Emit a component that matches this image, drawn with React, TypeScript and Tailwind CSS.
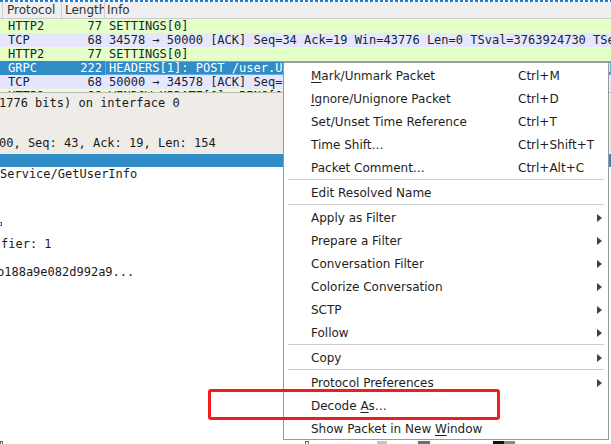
import type { ReactNode } from "react";

type Packet = { proto: string; len: string; info: string; row: string; selected?: boolean };

const packets: Packet[] = [
  { proto: "HTTP2", len: "77", info: "SETTINGS[0]", row: "bg-[#e4ffc7]" },
  {
    proto: "TCP",
    len: "68",
    info: "34578 → 50000 [ACK] Seq=34 Ack=19 Win=43776 Len=0 TSval=3763924730 TSecr=3763924730",
    row: "bg-[#e7e6ff]",
  },
  { proto: "HTTP2", len: "77", info: "SETTINGS[0]", row: "bg-[#e4ffc7]" },
  {
    proto: "GRPC",
    len: "222",
    info: "HEADERS[1]: POST /user.UserService/GetUserInfo, DATA[1] (GRPC) (PROTOBUF)",
    row: "bg-[#308cc6]",
    selected: true,
  },
  {
    proto: "TCP",
    len: "68",
    info: "50000 → 34578 [ACK] Seq=19 Ack=197 Win=43648 Len=0 TSval=3763924731",
    row: "bg-[#e7e6ff]",
  },
  { proto: "HTTP2", len: "98", info: "WINDOW_UPDATE[0], PING[0]", row: "bg-[#e4ffc7]" },
];

type MenuEntry = { label: ReactNode; shortcut?: string; sub?: boolean } | "sep";

const u = (c: string) => <span className="underline underline-offset-[2px]">{c}</span>;

const menu: MenuEntry[] = [
  { label: <>{u("M")}ark/Unmark Packet</>, shortcut: "Ctrl+M" },
  { label: <>{u("I")}gnore/Unignore Packet</>, shortcut: "Ctrl+D" },
  { label: "Set/Unset Time Reference", shortcut: "Ctrl+T" },
  { label: "Time Shift…", shortcut: "Ctrl+Shift+T" },
  { label: "Packet Comment…", shortcut: "Ctrl+Alt+C" },
  "sep",
  { label: "Edit Resolved Name" },
  "sep",
  { label: "Apply as Filter", sub: true },
  { label: "Prepare a Filter", sub: true },
  { label: "Conversation Filter", sub: true },
  { label: "Colorize Conversation", sub: true },
  { label: "SCTP", sub: true },
  { label: "Follow", sub: true },
  "sep",
  { label: "Copy", sub: true },
  "sep",
  { label: "Protocol Preferences", sub: true },
  { label: <>Decode {u("A")}s…</> },
  { label: <>Show Packet in New {u("W")}indow</> },
];

const mono = "font-['DejaVu_Sans_Mono','Liberation_Mono',monospace] text-[12px]";
const sans = "font-['DejaVu_Sans','Liberation_Sans',sans-serif] text-[12px]";

function ContextMenu() {
  return (
    <div className={`absolute left-[283px] top-[62px] w-[326px] bg-white border border-[#9a9a9a] ${sans} text-[#1e1e1e]`}>
      {menu.map((m, i) =>
        m === "sep" ? (
          <div key={i} className="h-[2px] mx-1 flex flex-col justify-end">
            <div className="h-px bg-[#cdcdcd]" />
          </div>
        ) : (
          <div key={i} className="h-[23px] flex items-center pt-[2px] pl-[27px] pr-[5px] leading-none">
            <span className="w-[207px] whitespace-nowrap">{m.label}</span>
            <span className="flex-1 whitespace-nowrap">{m.shortcut}</span>
            {m.sub && (
              <svg width="5" height="8" viewBox="0 0 5 8" className="mr-px">
                <polygon points="0,0 5,4 0,8" fill="#404040" />
              </svg>
            )}
          </div>
        )
      )}
    </div>
  );
}

export default function App() {
  return (
    <div className="relative w-[611px] h-[444px] overflow-hidden bg-white">
      <div className="h-[2px] bg-[repeating-linear-gradient(90deg,#1f7fd6_0_3px,transparent_3px_5px)]" />

      {/* packet list header */}
      <div className={`flex h-[17px] bg-[#efefef] border-b border-[#cbcbcb] text-[#2e3436] ${sans}`}>
        <div className="w-[3px] border-r border-[#cfcfcf]" />
        <div className="w-[59px] pl-1 flex items-center border-r border-[#cfcfcf]">Protocol</div>
        <div className="w-[43px] pl-[3px] flex items-center overflow-hidden whitespace-nowrap border-r border-[#cfcfcf]">
          Length
        </div>
        <div className="flex-1 pl-[2px] flex items-center">Info</div>
      </div>

      {/* packet list rows */}
      <div className={`h-[73px] overflow-hidden ${mono} leading-[14px]`}>
        {packets.map((p, i) => (
          <div
            key={i}
            className={`flex h-[14px] whitespace-pre ${p.row} ${p.selected ? "text-white" : "text-[#12272e]"}`}
          >
            <div className="w-[3px]" />
            <div className="w-[59px] pl-[5px]">{p.proto}</div>
            <div className="w-[43px] text-right pr-[3px]">{p.len}</div>
            <div
              className={`flex-1 overflow-hidden ${p.selected ? "border border-[#69ace0] pl-[3px] leading-[12px]" : "pl-[4px]"}`}
            >
              {p.info}
            </div>
          </div>
        ))}
      </div>
      <div className="h-px bg-[#bdb9b4]" />

      {/* details pane */}
      <div className={`h-[61px] bg-[#efebe7] text-[#1a1a1a] ${mono} leading-5 whitespace-pre`}>
        <div className="h-5 -ml-px">1776 bits) on interface 0</div>
        <div className="h-5" />
        <div className="h-5 -ml-px">00, Seq: 43, Ack: 19, Len: 154</div>
      </div>
      <div className="h-[13px] bg-[#308cc6]" />
      <div className={`h-[274px] text-[#1a1a1a] ${mono} leading-[14px] whitespace-pre`}>
        <div className="h-[14px]">Service/GetUserInfo</div>
        <div className="h-[40px]" />
        <div className="h-[16px] pt-px">
          <div className="w-[3px] h-[4px] border border-[#666] -ml-px" />
        </div>
        <div className="h-[14px] pl-px">fier: 1</div>
        <div className="h-[14px]" />
        <div className="h-[14px] -ml-[3px]">b188a9e082d992a9...</div>
      </div>

      {/* bottom strip peeking under the menu */}
      <div className="flex h-[3px]">
        <div className="w-[3px] border border-[#666] border-b-0" />
        <div className="ml-[302px] w-[4px] border border-[#666] border-b-0" />
        <div className="ml-[68px] w-[10px] bg-[#c4c4c4]" />
        <div className="ml-[31px] w-[12px] bg-[#6e6e6e]" />
        <div className="ml-[63px] w-[11px] bg-[#111]" />
        <div className="w-[11px] bg-[#888]" />
      </div>

      <ContextMenu />

      <div className="absolute left-[208px] top-[389px] w-[292px] h-[31px] border-[3px] border-[#f31c1c] rounded-[3px]" />
    </div>
  );
}
